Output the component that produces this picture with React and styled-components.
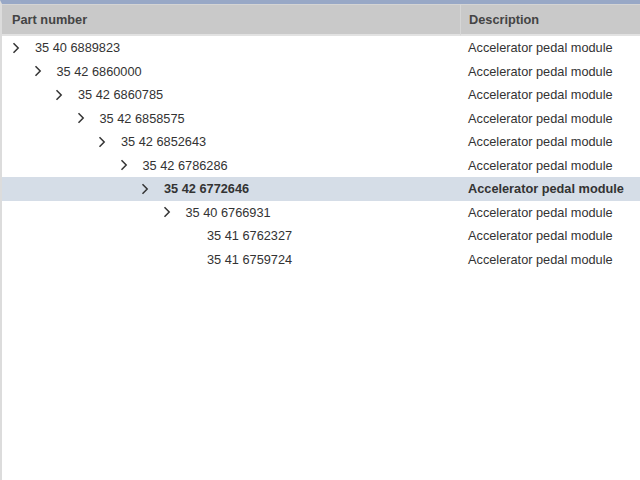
import React from 'react';
import styled, { createGlobalStyle } from 'styled-components';

const GlobalStyle = createGlobalStyle`
  html, body {
    margin: 0;
    padding: 0;
    background: #fff;
  }
  body {
    font-family: "Liberation Sans", Arial, sans-serif;
    font-size: 12.75px;
    color: #333;
  }
`;

const Page = styled.div`
  width: 640px;
  height: 480px;
  box-sizing: border-box;
  border-top: 4px solid #98a8c6;
  border-left: 2px solid #dcdcdc;
  overflow: hidden;
`;

const Grid = styled.div`
  display: grid;
  grid-template-columns: 458px 1fr;
`;

const HeaderCell = styled.div`
  height: 29px;
  display: flex;
  align-items: center;
  padding-left: ${p => p.pad || 10}px;
  background: #c9c9c9;
  border-top: 1px solid #d4d4d4;
  border-bottom: 2px solid #e2e2e2;
  border-left: ${p => (p.divider ? '1px solid #d6d6d6' : 'none')};
  font-weight: bold;
  color: #444;
`;

const Row = styled.div`
  display: contents;
  & > div {
    background: ${p => (p.selected ? '#d5dde7' : 'transparent')};
    font-weight: ${p => (p.selected ? 'bold' : 'normal')};
  }
`;

const PartCell = styled.div`
  height: 23.5px;
  display: flex;
  align-items: center;
  padding-left: ${p => 10 + p.level * 21.5}px;
  white-space: nowrap;
`;

const Toggle = styled.span`
  width: 23px;
  display: flex;
  align-items: center;
  svg {
    display: block;
  }
`;

const DescCell = styled.div`
  height: 23.5px;
  display: flex;
  align-items: center;
  padding-left: 8px;
  white-space: nowrap;
`;

const Chevron = () => (
  <svg width="8" height="12" viewBox="0 0 8 12">
    <path d="M1.5 1.2 L6.2 6 L1.5 10.8" fill="none" stroke="#333" strokeWidth="1.5" />
  </svg>
);

const parts = [
  { num: '35 40 6889823', level: 0, children: true },
  { num: '35 42 6860000', level: 1, children: true },
  { num: '35 42 6860785', level: 2, children: true },
  { num: '35 42 6858575', level: 3, children: true },
  { num: '35 42 6852643', level: 4, children: true },
  { num: '35 42 6786286', level: 5, children: true },
  { num: '35 42 6772646', level: 6, children: true, selected: true },
  { num: '35 40 6766931', level: 7, children: true },
  { num: '35 41 6762327', level: 8 },
  { num: '35 41 6759724', level: 8 },
];

const App = () => {
  return (
    <>
      <GlobalStyle />
      <Page>
        <Grid>
          <HeaderCell>Part number</HeaderCell>
          <HeaderCell divider pad={8}>Description</HeaderCell>
          {parts.map(p => (
            <Row key={p.num} selected={p.selected}>
              <PartCell level={p.level}>
                <Toggle>{p.children && <Chevron />}</Toggle>
                {p.num}
              </PartCell>
              <DescCell>Accelerator pedal module</DescCell>
            </Row>
          ))}
        </Grid>
      </Page>
    </>
  );
};

export default App;
